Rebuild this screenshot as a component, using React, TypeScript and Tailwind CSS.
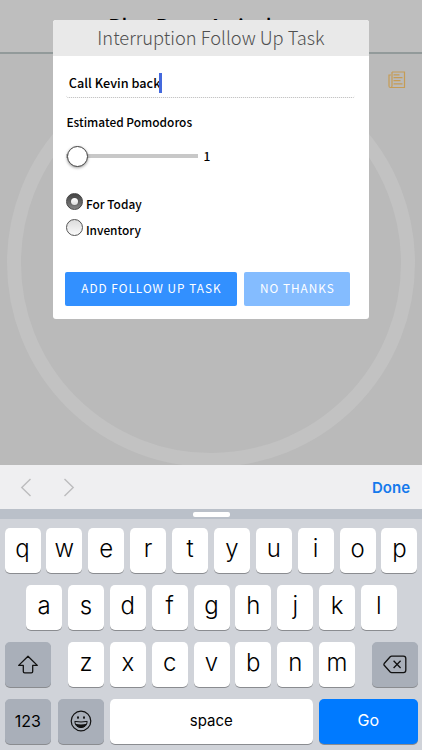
import { useState } from 'react';

const UI_FONT = "font-['Noto_Sans_CJK_SC','Noto_Sans_CJK_JP',sans-serif]";

const topRow = ['q', 'w', 'e', 'r', 't', 'y', 'u', 'i', 'o', 'p'];
const homeRow = ['a', 's', 'd', 'f', 'g', 'h', 'j', 'k', 'l'];
const bottomRow = ['z', 'x', 'c', 'v', 'b', 'n', 'm'];

function Key({ label }: { label: string }) {
  return (
    <button className="flex h-[45.5px] w-[36px] shrink-0 items-center justify-center rounded-[5px] bg-white pb-[2px] text-[24px] font-[350] text-black shadow-[0_1px_0_#8a8c90]">
      {label}
    </button>
  );
}

function ShiftIcon() {
  return (
    <svg width="22" height="20" viewBox="0 0 22 20" fill="none" stroke="#111" strokeWidth="1.3" strokeLinejoin="round" className="mt-[2px]">
      <path d="M11 1.2 L20.3 10.4 H15.7 V16.4 Q15.7 17.8 14.3 17.8 H7.7 Q6.3 17.8 6.3 16.4 V10.4 H1.7 Z" />
    </svg>
  );
}

function EmojiIcon() {
  return (
    <svg width="22" height="22" viewBox="0 0 22 22" fill="none" stroke="#111" strokeWidth="1.2">
      <circle cx="11" cy="11" r="9.8" />
      <ellipse cx="8" cy="7.6" rx="1" ry="1.4" fill="#111" stroke="none" />
      <ellipse cx="14" cy="7.6" rx="1" ry="1.4" fill="#111" stroke="none" />
      <path d="M4.8 11.4 Q11 12.6 17.2 11.4 Q16.8 17.4 11 17.6 Q5.2 17.4 4.8 11.4 Z" strokeWidth="1" />
      <path d="M5.4 13.8 Q11 15.2 16.6 13.8 Q15.4 17.4 11 17.6 Q6.6 17.4 5.4 13.8 Z" fill="#111" stroke="none" />
    </svg>
  );
}

function DeleteIcon() {
  return (
    <svg width="24" height="19" viewBox="0 0 24 19" fill="none" stroke="#111" strokeWidth="1.3" strokeLinejoin="round" className="mt-px">
      <path d="M8.6 1.2 H20.4 Q22.8 1.2 22.8 3.6 V15.2 Q22.8 17.6 20.4 17.6 H8.6 Q7.8 17.6 7.2 17 L1.2 10.3 Q0.6 9.4 1.2 8.5 L7.2 1.8 Q7.8 1.2 8.6 1.2 Z" />
      <path d="M10.6 5.8 L17.6 13 M17.6 5.8 L10.6 13" />
    </svg>
  );
}

function NotesIcon() {
  return (
    <svg width="18" height="18" viewBox="0 0 18 18" fill="none" stroke="#c69c54" strokeWidth="1.2">
      <path d="M4 1 H16.5 V16.5 H2.5 Q1 16.5 1 15 V4 H3" />
      <path d="M4 1 V15 Q4 16.5 2.5 16.5" />
      <path d="M5.5 3.8 H11.5 M5.5 6.7 H14.5 M5.5 9.6 H12.5 M5.5 12.8 H14.5" />
    </svg>
  );
}

interface RadioProps {
  label: string;
  checked: boolean;
  onSelect: () => void;
}

function Radio({ label, checked, onSelect }: RadioProps) {
  return (
    <button onClick={onSelect} className="flex h-[26px] items-start gap-[2.5px]">
      {checked ? (
        <span className="flex size-[17px] items-center justify-center rounded-full border border-[#444] bg-linear-to-b from-[#444] to-[#858585]">
          <span className="size-[7px] rounded-full bg-linear-to-b from-white to-[#ddd] shadow-[0_0_1px_#222]" />
        </span>
      ) : (
        <span className="size-[17px] rounded-full border border-[#555] bg-linear-to-b from-[#dcdcdc] to-[#fafafa]" />
      )}
      <span className="pt-px text-[11.9px] leading-5 font-medium">{label}</span>
    </button>
  );
}

export default function App() {
  const [when, setWhen] = useState('today');

  return (
    <main className={`relative flex h-[750px] w-[422px] flex-col overflow-hidden bg-[#bababa] text-black ${UI_FONT}`}>
      {/* Timer screen, dimmed */}
      <section className="h-[465px] shrink-0 overflow-hidden">
        <header className="flex h-[54px] justify-center border-b-2 border-[#929a9a] bg-[#bebebe] pt-[12px] pr-[42px]">
          <h1 className="text-[20px] leading-7 font-medium whitespace-nowrap">Blue Parts Arrival</h1>
        </header>
        <div className="flex justify-end pt-[17px] pr-[16px]">
          <NotesIcon />
        </div>
        <div className="mx-auto -mt-[30px] size-[408px] rounded-full border-[14px] border-[#c2c2c2]" />
      </section>

      {/* Follow up dialog */}
      <div className="absolute top-[20px] left-[53px] h-[299px] w-[316px] overflow-hidden rounded-[3px] bg-white">
        <h2 className="flex h-[36px] items-center justify-center bg-[#e9e9e9] text-[18.3px] font-light text-[#505050]">
          Interruption Follow Up Task
        </h2>
        <div className="pt-[14px] pr-[14px] pl-[13.4px]">
          <div className="flex h-[28px] items-center rounded-[3px] border-b border-dotted border-[#b8b8b8] pb-px pl-[2.4px]">
            <span className="text-[12.7px] font-medium">Call Kevin back</span>
            <span className="-ml-px h-[20px] w-[3px] bg-[#4469dd]" />
          </div>
          <p className="mt-[14px] text-[11.9px] leading-5 font-medium">Estimated Pomodoros</p>
          <div className="mt-[13px] flex h-[22px] items-center">
            <div className="relative h-[4px] w-[132px] bg-[#c8c8c8]">
              <span className="absolute -top-[8.5px] left-[0.5px] size-[21px] rounded-full border border-[#444] bg-white shadow-[0_1px_3px_rgba(0,0,0,0.4)]" />
            </div>
            <span className="ml-[5px] text-[12px] font-medium">1</span>
          </div>
          <div className="mt-[26px]">
            <Radio label="For Today" checked={when === 'today'} onSelect={() => setWhen('today')} />
            <Radio label="Inventory" checked={when === 'inventory'} onSelect={() => setWhen('inventory')} />
          </div>
          <div className="-ml-px mt-[27px] flex gap-[7px] text-[11.8px] tracking-[1px] text-white">
            <button className="h-[34px] w-[172px] rounded-[2px] bg-[#3290ff] pb-[2px] whitespace-nowrap">ADD FOLLOW UP TASK</button>
            <button className="h-[34px] w-[106px] rounded-[2px] bg-[#84bcff] pb-[2px] whitespace-nowrap">NO THANKS</button>
          </div>
        </div>
      </div>

      {/* Input accessory bar */}
      <div className="flex h-[44px] shrink-0 items-center justify-between bg-[#efeff1] pr-[12px] pl-[20px]">
        <div className="flex gap-[31px]">
          <svg width="12" height="19" viewBox="0 0 12 19" fill="none" stroke="#bcbcbe" strokeWidth="1.4">
            <path d="M10.5 1 L1.8 9.5 L10.5 18" />
          </svg>
          <svg width="12" height="19" viewBox="0 0 12 19" fill="none" stroke="#bcbcbe" strokeWidth="1.4">
            <path d="M1.5 1 L10.2 9.5 L1.5 18" />
          </svg>
        </div>
        <button className="pt-[2px] font-['Inter',sans-serif] text-[15px] font-semibold text-[#1479ec]">Done</button>
      </div>

      {/* Keyboard */}
      <div className="flex grow flex-col bg-[#d0d3d9] font-['Inter',sans-serif]">
        <div className="flex h-[10px] justify-center bg-[#bac0c9] pt-[3px]">
          <span className="h-[5px] w-[37px] rounded-[2px] bg-white" />
        </div>
        <div className="flex flex-col gap-[11.5px] px-[4.5px] pt-[8.5px]">
          <div className="flex justify-between">
            {topRow.map((k) => (
              <Key key={k} label={k} />
            ))}
          </div>
          <div className="flex justify-center gap-[5.85px] pl-px">
            {homeRow.map((k) => (
              <Key key={k} label={k} />
            ))}
          </div>
          <div className="flex justify-between">
            <button className="flex h-[45.5px] w-[46px] items-center justify-center rounded-[5px] bg-[#a9afb9] shadow-[0_1px_0_#8a8c90]">
              <ShiftIcon />
            </button>
            <div className="flex gap-[5.85px] pl-px">
              {bottomRow.map((k) => (
                <Key key={k} label={k} />
              ))}
            </div>
            <button className="flex h-[45.5px] w-[46px] items-center justify-center rounded-[5px] bg-[#a9afb9] shadow-[0_1px_0_#8a8c90]">
              <DeleteIcon />
            </button>
          </div>
          <div className="flex gap-[6.5px] text-[16px]">
            <button className="h-[45.5px] w-[46.5px] rounded-[5px] bg-[#a9afb9] shadow-[0_1px_0_#8a8c90]">123</button>
            <button className="flex h-[45.5px] w-[46px] items-center justify-center rounded-[5px] bg-[#a9afb9] shadow-[0_1px_0_#8a8c90]">
              <EmojiIcon />
            </button>
            <button className="h-[45.5px] w-[202.5px] rounded-[5px] bg-white pb-px text-[15px] shadow-[0_1px_0_#8a8c90]">space</button>
            <button className="h-[45.5px] grow rounded-[5px] bg-[#007aff] pb-[2px] text-white shadow-[0_1px_0_#8a8c90]">Go</button>
          </div>
        </div>
      </div>
    </main>
  );
}
